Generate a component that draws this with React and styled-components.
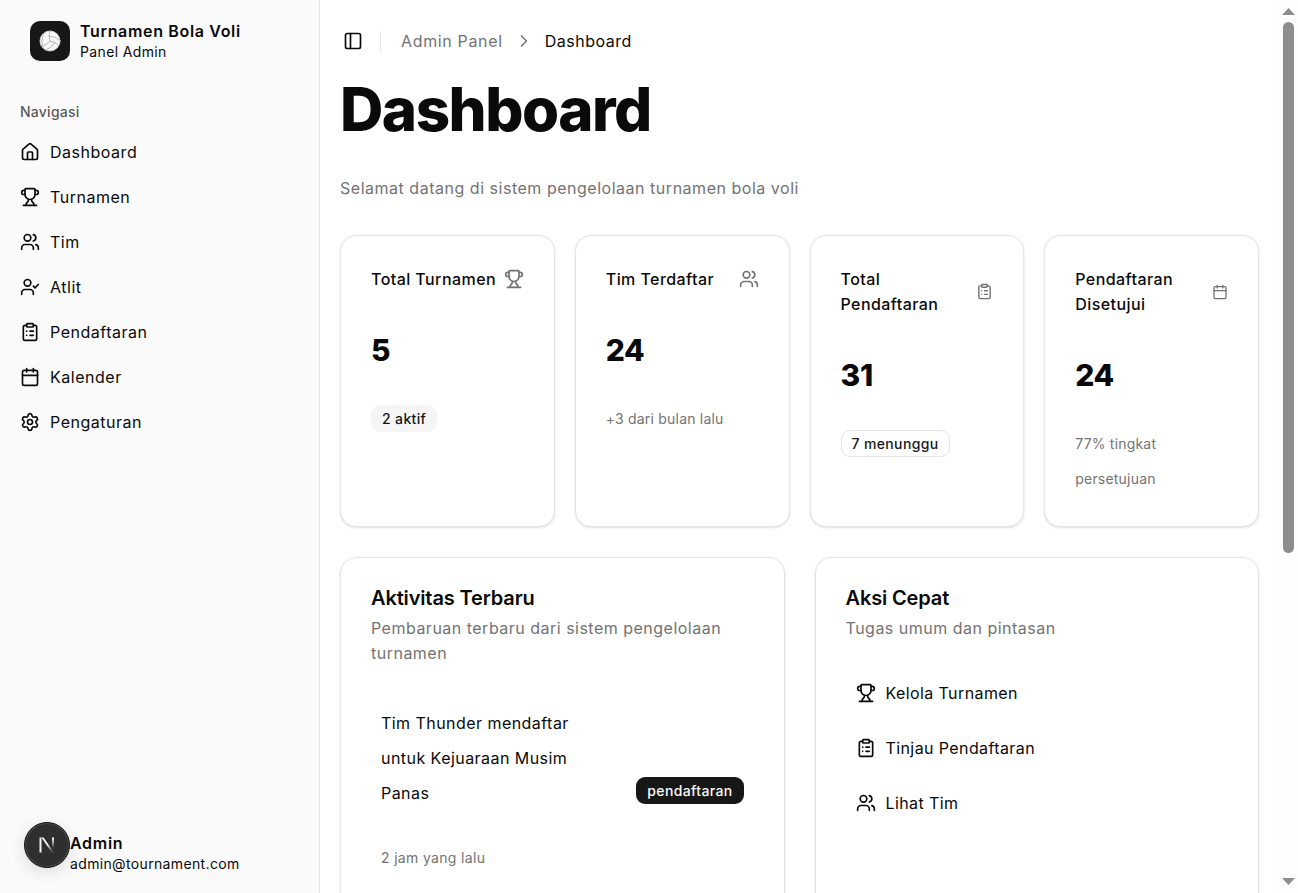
import React from "react";
import styled, { createGlobalStyle } from "styled-components";
import {
  House,
  Trophy,
  Users,
  UserCheck,
  ClipboardList,
  Calendar,
  Settings,
  PanelLeft,
  ChevronRight,
} from "lucide-react";

const GlobalStyle = createGlobalStyle`
  html, body { margin: 0; padding: 0; background: #fff; }
  body {
    font-family: Inter, "Liberation Sans", sans-serif;
    color: #0a0a0a;
    font-size: 16px;
    letter-spacing: 0.5px;
  }
  * { box-sizing: border-box; }
`;

const Shell = styled.div`
  display: flex;
  align-items: flex-start;
  min-height: 1447px;
  padding-right: 19px;
`;

const Rail = styled.div`
  position: fixed;
  top: 0;
  right: 0;
  bottom: 0;
  width: 19px;
  background: #fdfdfd;
  display: flex;
  flex-direction: column;
  align-items: center;
  padding: 8px 0;
`;

const RailThumb = styled.div`
  width: 11px;
  height: 531px;
  margin-top: 7px;
  border-radius: 6px;
  background: #8d8d8d;
`;

const RailArrowDown = styled.svg`
  margin-top: auto;
`;

const Sidebar = styled.aside`
  position: sticky;
  top: 0;
  flex: 0 0 320px;
  height: 100vh;
  display: flex;
  flex-direction: column;
  background: #fafafa;
  border-right: 1px solid #e5e5e5;
`;

const Brand = styled.div`
  display: flex;
  align-items: flex-start;
  gap: 10px;
  padding: 21px 30px 0;
`;

const LogoBox = styled.div`
  width: 40px;
  height: 40px;
  border-radius: 10px;
  background: #171717;
  display: flex;
  align-items: center;
  justify-content: center;
  flex: none;
`;

const BrandText = styled.div`
  display: flex;
  flex-direction: column;
`;

const BrandTitle = styled.span`
  font-size: 16px;
  line-height: 20px;
  font-weight: 600;
  letter-spacing: 0.66px;
`;

const BrandSub = styled.span`
  font-size: 14px;
  line-height: 20px;
  margin-top: 1px;
  letter-spacing: 0.36px;
`;

const NavLabel = styled.div`
  margin: 40px 20px 0;
  font-size: 14px;
  line-height: 20px;
  font-weight: 500;
  letter-spacing: 0.25px;
  color: rgba(10, 10, 10, 0.7);
`;

const NavList = styled.nav`
  display: flex;
  flex-direction: column;
  margin-top: 7px;
`;

const NavItem = styled.div`
  height: 45px;
  display: flex;
  align-items: center;
  gap: 10px;
  padding: 0 20px;
  font-size: 16px;
  letter-spacing: 0.52px;
`;

const SidebarFoot = styled.div`
  margin-top: auto;
  padding: 0 40px 19px 70px;
  display: flex;
  flex-direction: column;
`;

const FootName = styled.span`
  font-size: 16px;
  line-height: 20px;
  font-weight: 600;
  letter-spacing: 0.7px;
`;

const FootMail = styled.span`
  font-size: 14px;
  line-height: 20px;
  margin-top: 1px;
  letter-spacing: 0.35px;
`;

const DevBadge = styled.div`
  position: fixed;
  left: 24px;
  bottom: 25px;
  width: 46px;
  height: 46px;
  border-radius: 50%;
  background: #2f2f2f;
  border: 1px solid #111;
  box-shadow: inset 0 0 0 1px rgba(255, 255, 255, 0.14), 0 4px 16px rgba(0, 0, 0, 0.12);
  display: flex;
  align-items: center;
  justify-content: center;
`;

const Main = styled.main`
  flex: 1;
  min-width: 0;
  padding: 0 20px;
`;

const TopBar = styled.header`
  height: 82px;
  display: flex;
  align-items: center;
`;

const IconButton = styled.div`
  width: 26px;
  height: 20px;
  display: flex;
  align-items: center;
  justify-content: center;
`;

const BarDivider = styled.div`
  width: 1px;
  height: 20px;
  background: #e5e5e5;
  margin: 0 20px 0 14px;
`;

const Crumb = styled.span`
  font-size: 16px;
  letter-spacing: ${(p) => (p.$current ? "0.5px" : "0.65px")};
  color: ${(p) => (p.$current ? "#0a0a0a" : "#737373")};
`;

const CrumbSep = styled.span`
  display: flex;
  color: #737373;
  margin: 0 11px;
`;

const PageTitle = styled.h1`
  margin: -3px 0 0;
  font-size: 60px;
  line-height: 60px;
  font-weight: 850;
  letter-spacing: -1.5px;
`;

const PageSub = styled.p`
  margin: 37px 0 0;
  font-size: 16px;
  line-height: 25px;
  letter-spacing: 0.52px;
  color: #737373;
`;

const StatGrid = styled.section`
  display: grid;
  grid-template-columns: repeat(4, 1fr);
  gap: 20px;
  margin-top: 34px;
`;

const Card = styled.div`
  background: #fff;
  border: 1px solid #e5e5e5;
  border-radius: 16px;
  box-shadow: 0 1px 3px rgba(0, 0, 0, 0.1), 0 1px 2px -1px rgba(0, 0, 0, 0.1);
  padding: 30px;
`;

const StatHead = styled.div`
  display: flex;
  align-items: center;
  justify-content: space-between;
  gap: 6px;
`;

const StatTitle = styled.div`
  padding-top: 1px;
  font-size: 16px;
  line-height: 25px;
  font-weight: 500;
  letter-spacing: 0.43px;
`;

const StatIcon = styled.span`
  display: flex;
  flex: none;
  color: #737373;
`;

const StatValue = styled.div`
  margin-top: 33px;
  font-size: 30px;
  line-height: 50px;
  font-weight: 800;
  letter-spacing: -0.3px;
`;

const StatFoot = styled.div`
  margin-top: 26px;
  min-height: 35px;
  display: flex;
  align-items: center;
`;

const Muted = styled.div`
  font-size: 14px;
  line-height: 35px;
  letter-spacing: 0.2px;
  color: #737373;
`;

const Badge = styled.span`
  display: inline-flex;
  align-items: center;
  height: 27px;
  padding: 0 10px;
  border-radius: 9px;
  font-size: 14px;
  font-weight: 500;
  letter-spacing: 0.36px;
  background: ${(p) => (p.$outline ? "#fff" : p.$dark ? "#171717" : "#f5f5f5")};
  color: ${(p) => (p.$dark ? "#fafafa" : "#171717")};
  border: 1px solid ${(p) => (p.$outline ? "#e5e5e5" : "transparent")};
`;

const PanelGrid = styled.section`
  display: grid;
  grid-template-columns: 1fr 1fr;
  gap: 30px;
  margin-top: 30px;
`;

const Panel = styled(Card)`
  min-height: 860px;
`;

const PanelTitle = styled.h2`
  margin: 0;
  font-size: 20px;
  line-height: 20px;
  font-weight: 600;
  letter-spacing: -0.14px;
`;

const PanelSub = styled.p`
  margin: 8px 0 0;
  font-size: 16px;
  line-height: 25px;
  letter-spacing: 0.49px;
  color: #737373;
`;

const Activity = styled.div`
  margin-top: 40px;
  padding: 0 10px;
`;

const ActivityRow = styled.div`
  display: flex;
  justify-content: space-between;
  align-items: flex-end;
`;

const ActivityText = styled.div`
  width: 200px;
  font-size: 16px;
  line-height: 35px;
  letter-spacing: 0.45px;
`;

const ActivityBadge = styled(Badge)`
  margin-bottom: 7px;
`;

const ActivityTime = styled(Muted)`
  margin-top: 29px;
  letter-spacing: 0.33px;
`;

const ActionList = styled.div`
  margin-top: 24px;
  display: flex;
  flex-direction: column;
`;

const ActionItem = styled.div`
  height: 55px;
  display: flex;
  align-items: center;
  gap: 10px;
  padding: 0 10px;
  font-size: 16px;
  letter-spacing: 0.4px;
`;

const nav = [
  [House, "Dashboard"],
  [Trophy, "Turnamen"],
  [Users, "Tim"],
  [UserCheck, "Atlit"],
  [ClipboardList, "Pendaftaran"],
  [Calendar, "Kalender"],
  [Settings, "Pengaturan"],
];

const stats = [
  { title: "Total Turnamen", Icon: Trophy, size: 20, value: "5", badge: "2 aktif" },
  { title: "Tim Terdaftar", Icon: Users, size: 20, value: "24", note: "+3 dari bulan lalu" },
  { title: "Total Pendaftaran", Icon: ClipboardList, size: 17, value: "31", badge: "7 menunggu", outline: true },
  { title: "Pendaftaran Disetujui", Icon: Calendar, size: 16, value: "24", note: "77% tingkat persetujuan" },
];

const actions = [
  [Trophy, "Kelola Turnamen"],
  [ClipboardList, "Tinjau Pendaftaran"],
  [Users, "Lihat Tim"],
];

const BallLogo = () => (
  <svg width="24" height="24" viewBox="0 0 24 24" fill="none" stroke="#a8a8a8" strokeWidth="0.8" strokeLinecap="round">
    <circle cx="12" cy="12" r="10" fill="#f6f6f6" stroke="#e8e8e8" />
    <path d="M11.1 7.1a16.55 16.55 0 0 1 10.9 4" />
    <path d="M12 12a12.6 12.6 0 0 1-8.7 5" />
    <path d="M16.8 13.6a16.55 16.55 0 0 1-9 7.5" />
    <path d="M20.7 17a12.8 12.8 0 0 0-8.7-5 13.3 13.3 0 0 1 0-10" />
    <path d="M6.6 3.6a16.55 16.55 0 0 0-1.2 15.8" />
  </svg>
);

const NextMark = () => (
  <svg width="16" height="16" viewBox="0 0 16 16" fill="none">
    <defs>
      <linearGradient id="nFadeA" x1="0" y1="0" x2="0.6" y2="1">
        <stop offset="0.55" stopColor="#fff" />
        <stop offset="1" stopColor="#fff" stopOpacity="0.15" />
      </linearGradient>
      <linearGradient id="nFadeB" x1="0" y1="0" x2="0" y2="1">
        <stop offset="0" stopColor="#fff" />
        <stop offset="1" stopColor="#fff" stopOpacity="0.1" />
      </linearGradient>
    </defs>
    <path d="M.5 .5h2v15h-2z" fill="#f0f0f0" />
    <path d="M2.5 .5h2L15 15.5h-2.3z" fill="url(#nFadeA)" />
    <path d="M13 .5h2v10.5l-2-3z" fill="url(#nFadeB)" />
  </svg>
);

export default function App() {
  return (
    <>
      <GlobalStyle />
      <Shell>
        <Sidebar>
          <Brand>
            <LogoBox>
              <BallLogo />
            </LogoBox>
            <BrandText>
              <BrandTitle>Turnamen Bola Voli</BrandTitle>
              <BrandSub>Panel Admin</BrandSub>
            </BrandText>
          </Brand>
          <NavLabel>Navigasi</NavLabel>
          <NavList>
            {nav.map(([Icon, label]) => (
              <NavItem key={label}>
                <Icon size={20} strokeWidth={2} />
                {label}
              </NavItem>
            ))}
          </NavList>
          <SidebarFoot>
            <FootName>Admin</FootName>
            <FootMail>admin@tournament.com</FootMail>
          </SidebarFoot>
        </Sidebar>
        <Main>
          <TopBar>
            <IconButton>
              <PanelLeft size={20} />
            </IconButton>
            <BarDivider />
            <Crumb>Admin Panel</Crumb>
            <CrumbSep>
              <ChevronRight size={20} strokeWidth={1.8} />
            </CrumbSep>
            <Crumb $current>Dashboard</Crumb>
          </TopBar>
          <PageTitle>Dashboard</PageTitle>
          <PageSub>Selamat datang di sistem pengelolaan turnamen bola voli</PageSub>
          <StatGrid>
            {stats.map(({ title, Icon, size, value, badge, note, outline }) => (
              <Card key={title}>
                <StatHead>
                  <StatTitle>{title}</StatTitle>
                  <StatIcon>
                    <Icon size={size} />
                  </StatIcon>
                </StatHead>
                <StatValue>{value}</StatValue>
                <StatFoot>
                  {badge ? <Badge $outline={outline}>{badge}</Badge> : <Muted>{note}</Muted>}
                </StatFoot>
              </Card>
            ))}
          </StatGrid>
          <PanelGrid>
            <Panel>
              <PanelTitle>Aktivitas Terbaru</PanelTitle>
              <PanelSub>Pembaruan terbaru dari sistem pengelolaan turnamen</PanelSub>
              <Activity>
                <ActivityRow>
                  <ActivityText>Tim Thunder mendaftar untuk Kejuaraan Musim Panas</ActivityText>
                  <ActivityBadge $dark>pendaftaran</ActivityBadge>
                </ActivityRow>
                <ActivityTime>2 jam yang lalu</ActivityTime>
              </Activity>
            </Panel>
            <Panel>
              <PanelTitle>Aksi Cepat</PanelTitle>
              <PanelSub>Tugas umum dan pintasan</PanelSub>
              <ActionList>
                {actions.map(([Icon, label]) => (
                  <ActionItem key={label}>
                    <Icon size={20} />
                    {label}
                  </ActionItem>
                ))}
              </ActionList>
            </Panel>
          </PanelGrid>
        </Main>
      </Shell>
      <DevBadge>
        <NextMark />
      </DevBadge>
      <Rail>
        <svg width="13" height="7" viewBox="0 0 13 7">
          <path d="M6.5 0L13 7H0z" fill="#8d8d8d" />
        </svg>
        <RailThumb />
        <RailArrowDown width="13" height="7" viewBox="0 0 13 7">
          <path d="M0 0h13L6.5 7z" fill="#8d8d8d" />
        </RailArrowDown>
      </Rail>
    </>
  );
}
